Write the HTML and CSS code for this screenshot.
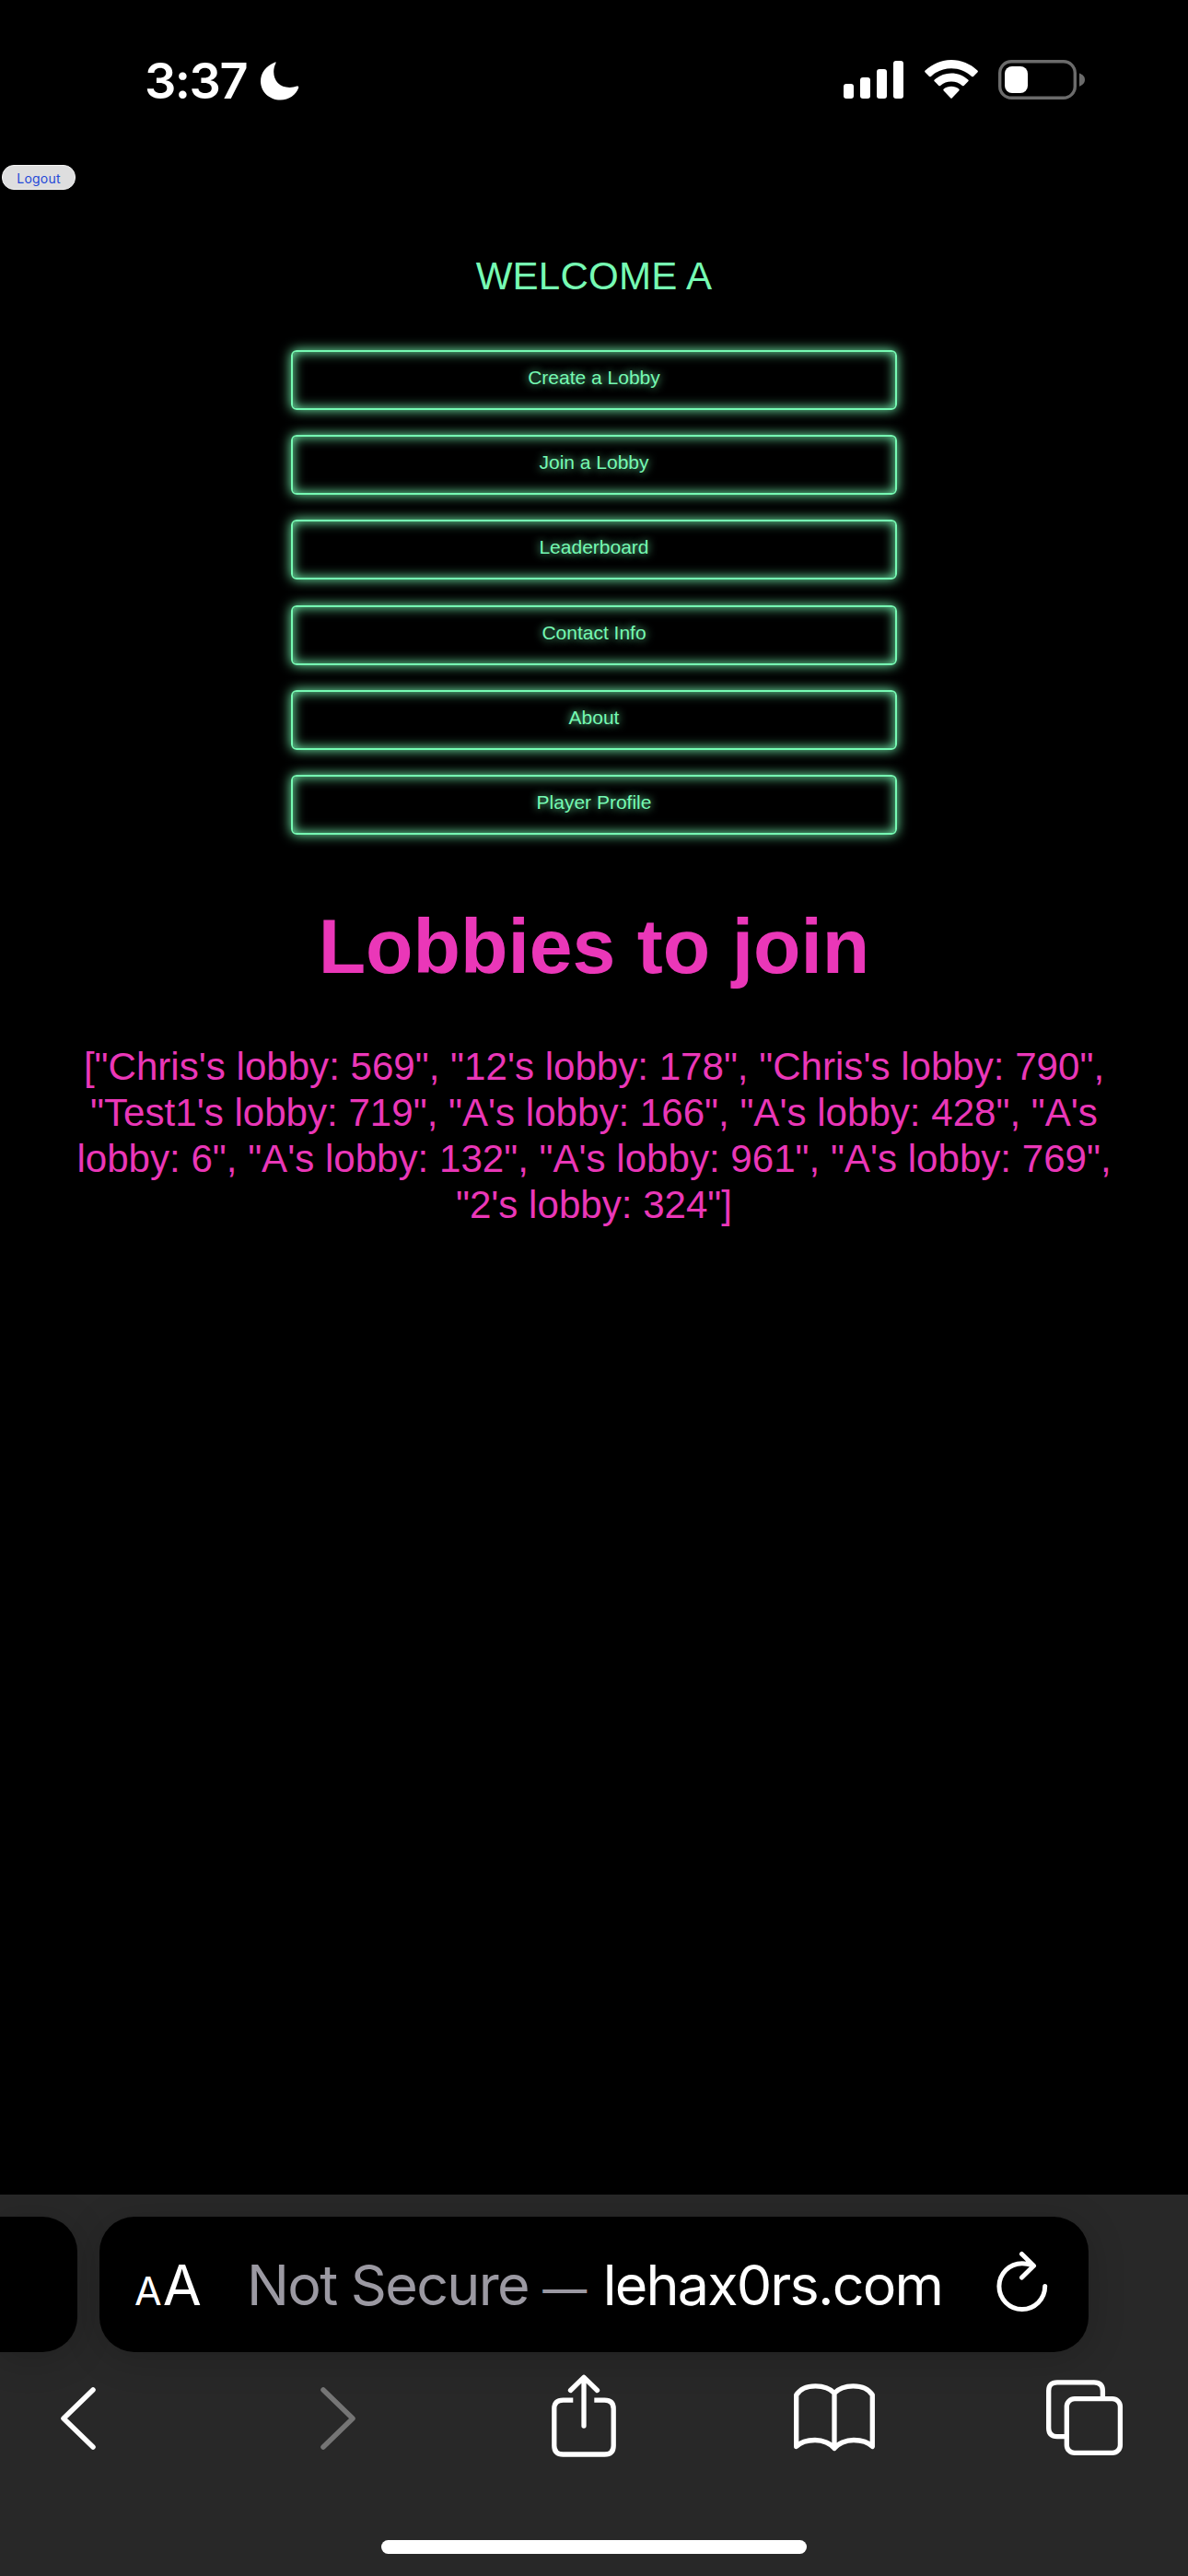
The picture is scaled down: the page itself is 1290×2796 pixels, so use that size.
FILE: index.html
```html
<!DOCTYPE html>
<html lang="en">
<head>
<meta charset="utf-8">
<title>Lobbies</title>
<link rel="stylesheet" href="styles.css">
</head>
<body>
<div class="phone">
  <header class="status">
    <div class="clock">
      <span class="time">3:37</span>
      <svg class="moon" width="42" height="42" viewBox="0 0 42 42"><path d="M15.8.4C5.600 4.500 0 12 0 21.200 0 32.500 9.500 41.500 21.500 41.500 31 41.500 38.500 36 41.200 28.300 41.600 26.900 40.500 26.200 39.300 26.600 37 27.400 34.500 27.900 31.500 27.900 21 27.900 14.200 21 14.200 11 14.200 8 14.800 5 16.200 2.300 16.900.8 16.600.1 15.800.4Z" fill="#fff"/></svg>
    </div>
    <div class="indicators">
      <svg width="65" height="44" viewBox="0 0 65 44" fill="#fff"><rect x="0" y="26" width="11" height="16" rx="3"/><rect x="18" y="19" width="11" height="23" rx="3"/><rect x="36" y="10" width="11" height="32" rx="3"/><rect x="54" y="1" width="11" height="41" rx="3"/></svg>
      <svg width="58" height="44" viewBox="0 0 58 44" fill="#fff"><path d="M29 0C18.500 0 8.300 4.200.6 11.500Q-.4 12.500.6 13.500L5 17.900Q5.900 18.800 6.900 17.900C13 12.200 20.800 9.200 29 9.200S45 12.200 51.100 17.900Q52.100 18.800 53 17.900L57.400 13.500Q58.400 12.500 57.400 11.500C49.700 4.200 39.500 0 29 0Z"/><path d="M29 14.500C22.200 14.500 15.900 17 10.800 21.500Q9.800 22.400 10.700 23.300L15.300 27.900Q16.200 28.700 17.100 27.900C20.500 25 24.600 23.500 29 23.500S37.500 25 40.900 27.900Q41.800 28.700 42.700 27.900L47.300 23.300Q48.200 22.400 47.200 21.500C42.100 17 35.800 14.500 29 14.500Z"/><path d="M29 28.800C26 28.800 23.100 29.700 20.800 31.500Q19.700 32.400 20.700 33.400L28.100 41.300Q29 42.300 29.900 41.300L37.300 33.400Q38.300 32.400 37.200 31.500C34.900 29.700 32 28.800 29 28.800Z"/></svg>
      <svg width="95" height="44" viewBox="0 0 95 44"><rect x="1.700" y="1.700" width="81.600" height="39.600" rx="12.500" fill="none" stroke="#6b6b6b" stroke-width="3.400"/><rect x="7" y="7" width="25" height="29" rx="8" fill="#fff"/><path d="M88 14.500C91.500 15.800 94 18 94 21.500S91.500 27.500 88 28.800Z" fill="#6b6b6b"/></svg>
    </div>
  </header>

  <main class="page">
    <button class="logout">Logout</button>
    <h2 class="welcome">WELCOME A</h2>
    <nav class="menu">
      <a class="item">Create a Lobby</a>
      <a class="item">Join a Lobby</a>
      <a class="item">Leaderboard</a>
      <a class="item">Contact Info</a>
      <a class="item">About</a>
      <a class="item">Player Profile</a>
    </nav>
    <h1 class="title">Lobbies to join</h1>
    <p class="lobbies">["Chris's lobby: 569", "12's lobby: 178", "Chris's lobby: 790",<br>"Test1's lobby: 719", "A's lobby: 166", "A's lobby: 428", "A's<br>lobby: 6", "A's lobby: 132", "A's lobby: 961", "A's lobby: 769",<br>"2's lobby: 324"]</p>
  </main>

  <footer class="browser">
    <div class="tabs">
      <div class="tab previous"></div>
      <div class="tab address">
        <span class="text-size"><span class="small-a">A</span><span class="large-a">A</span></span>
        <span class="url"><span class="insecure">Not Secure <span class="dash">—</span> </span><span class="domain">lehax0rs.com</span></span>
        <svg class="reload" width="56" height="68" viewBox="0 0 56 68" fill="none" stroke="#fff" stroke-width="5" stroke-linecap="round" stroke-linejoin="round"><path d="M27.500 3.500 40.500 16.200 27.500 29M38.500 15.500C35 14.300 31.500 13.700 27.800 13.700A24.900 24.900 0 1 0 52.700 38.600"/></svg>
      </div>
    </div>
    <div class="toolbar">
      <svg class="back" width="40" height="70" viewBox="0 0 40 70" fill="none" stroke="#fff" stroke-width="5.500" stroke-linecap="round" stroke-linejoin="round"><path d="M36 4 4 35 36 66"/></svg>
      <svg class="forward" width="40" height="70" viewBox="0 0 40 70" fill="none" stroke="#757575" stroke-width="5.500" stroke-linecap="round" stroke-linejoin="round"><path d="M4 4 36 35 4 66"/></svg>
      <svg class="share" width="70" height="90" viewBox="0 0 70 90" fill="none" stroke="#fff" stroke-width="5.300" stroke-linecap="round" stroke-linejoin="round"><path d="M35 56V4M20.500 17.500 35 3.300 49.500 17.500"/><path stroke-linecap="butt" d="M23.300 28.200H12.500Q2.800 28.200 2.800 37.500V77.500Q2.800 87 12.500 87H57.500Q67.200 87 67.200 77.500V37.500Q67.200 28.200 57.500 28.200H46.300"/></svg>
      <svg class="book" width="88" height="74" viewBox="0 0 88 74" fill="none" stroke="#fff" stroke-width="5.300" stroke-linecap="round" stroke-linejoin="round"><path d="M44 10.500C39.500 5.500 32 2.800 23.500 2.800S7 5.500 2.700 12.500V68.500C7 64 14.500 61.500 23 61.500S40 65 44 70.500C48 65 56.500 61.500 65 61.500S81 64 85.300 68.500V12.500C81 5.500 73 2.800 64.500 2.800S48.500 5.500 44 10.500V70"/></svg>
      <svg width="84" height="84" viewBox="0 0 84 84" fill="none" stroke="#fff" stroke-width="5.300"><path d="M20 61.700H12Q2.700 61.700 2.700 52.500V12Q2.700 2.800 12 2.800H52Q61.400 2.800 61.400 12V19"/><rect x="22.300" y="20.600" width="58.100" height="58.800" rx="8.500"/></svg>
    </div>
    <div class="home"></div>
  </footer>
</div>
</body>
</html>
```

FILE: styles.css
```css
* { box-sizing: border-box; }

body {
  margin: 0;
  background: #000;
  color: #fff;
}

svg { display: block; flex: none; }

.phone {
  display: flex;
  flex-direction: column;
  width: 1290px;
  height: 2796px;
  overflow: hidden;
  background: #000;
}

/* Status bar */
.status {
  display: flex;
  justify-content: space-between;
  height: 177px;
  padding: 65px 111px 0 157px;
}

.clock { display: flex; gap: 14px; height: 46px; align-items: center; }

.time {
  width: 112px;
  font: 600 54px/46px Inter, sans-serif;
  letter-spacing: -1.5px;
  white-space: nowrap;
}

.indicators { display: flex; height: 44px; }
.indicators svg:nth-child(2) { margin: 0 22px 0 23px; }

/* Web page */
.page {
  display: flex;
  flex: 1;
  flex-direction: column;
  align-items: center;
  padding-top: 2px;
  font-family: "Liberation Sans", Arial, sans-serif;
}

.logout {
  align-self: flex-start;
  width: 80px;
  height: 27px;
  margin-left: 2px;
  padding: 2px 0 0;
  border: 1px solid #f4f4f4;
  border-radius: 13px;
  background: #dededf;
  color: #2449d8;
  font: 400 14px/22px Inter, sans-serif;
  letter-spacing: 0.2px;
}

.welcome {
  margin: 69px 0 55px;
  color: #76fab3;
  font-size: 42.1px;
  font-weight: 400;
  line-height: 50px;
  letter-spacing: 0.2px;
}

.menu { display: flex; flex-direction: column; gap: 27.2px; }

.item {
  width: 658px;
  height: 65px;
  border: 2px solid #76fab3;
  border-radius: 6px;
  box-shadow: 0 0 13px #76fab3, inset 0 0 13px #76fab3;
  color: #76fab3;
  font-size: 21px;
  line-height: 56px;
  text-align: center;
  text-shadow: 0 0 10px #76fab3;
}

.title {
  margin: 72px 0 57px;
  color: #ea37b8;
  font-size: 84.2px;
  font-weight: 700;
  line-height: 98px;
}

.lobbies {
  margin: 0;
  color: #ea37b8;
  font-size: 42.1px;
  line-height: 50px;
  text-align: center;
  white-space: nowrap;
}

/* Browser controls */
.browser {
  height: 414px;
  padding-top: 24px;
  background: #282828;
}

.tabs { display: flex; gap: 24px; height: 147px; }

.tab { background: #000; box-shadow: 0 6px 40px rgba(0, 0, 0, 0.18); }
.previous { width: 84px; border-radius: 0 38px 38px 0; }

.address {
  display: flex;
  align-items: flex-start;
  width: 1074px;
  padding: 37px 44px 0 38px;
  border-radius: 38px;
  font-family: Inter, sans-serif;
  line-height: 74px;
  white-space: nowrap;
}

.text-size { width: 122px; }
.small-a { font-size: 43px; margin-right: 1px; }
.large-a { font-size: 61px; }

.url { flex: 1; font-size: 61px; }
.insecure { color: #9b99a2; letter-spacing: -1.7px; white-space: pre; }
.dash { font-size: 48px; letter-spacing: 0; }
.domain { margin-left: 2px; letter-spacing: -1.8px; }

.toolbar {
  display: flex;
  align-items: center;
  height: 144px;
  padding-left: 65px;
}

.forward { margin: 0 212px 0 242px; }
.share { margin-bottom: 7px; }
.book { margin: 0 186px 2px 193px; }

.home {
  width: 462px;
  height: 15px;
  margin: 60px auto 0;
  border-radius: 8px;
  background: #fff;
}
```
